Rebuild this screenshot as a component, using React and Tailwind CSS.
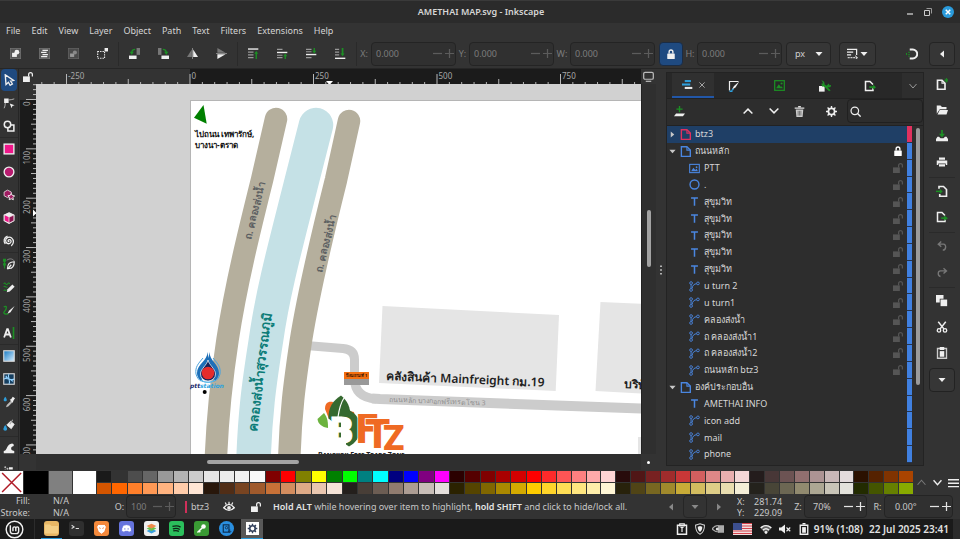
import clsx from 'clsx'

const W = '#efefef'
const G = '#1c8f24'
const B = '#2f9fdc'
const P = '#f0178a'

const MENUS = ['File', 'Edit', 'View', 'Layer', 'Object', 'Path', 'Text', 'Filters', 'Extensions', 'Help']

const SWATCHES_TOP =
  '1a1a1a 333333 4d4d4d 666666 999999 b3b3b3 cccccc e6e6e6 ececec f2f2f2 f9f9f9 800000 ff0000 808000 ffff00 008000 00ff00 008080 00ffff 000080 0000ff 800080 ff00ff 2b0000 550000 800000 aa0000 d40000 ff0000 ff2a2a ff5555 ff8080 ffaaaa ffd5d5 280b0b 501616 782121 a02c2c c83737 d35f5f de8787 e9afaf f4d7d7 241c1c 483737 6c5353 916f6f ac9393 c8b7b7 e3dbdb 2b1100 552200 803300 aa4400'.split(' ')
const SWATCHES_BOTTOM =
  'd45500 ff6600 ff7f2a ff9955 ffb380 ffccaa ffe6d5 28170b 502d16 784421 a05a2c c87137 d38d5f deaa87 e9c6af f4e3d7 241f1c 483e37 6c5d53 917c6f ac9d93 c8beb7 e3dedb 2b2200 554400 806600 aa8800 d4aa00 ffcc00 ffd42a ffdd55 ffe680 ffeeaa fff6d5 28220b 504416 786721 a0892c c8ab37 d3bc5f decd87 e9ddaf f4eed7 24221c 484537 6c6753 918a6f aca793 c8c4b7 e3e2db 222b00 445500 668000 88aa00'.split(' ')

const ROWS = [
  { name: 'btz3', kind: 'layer', depth: 0, open: false, selected: true },
  { name: 'ถนนหลัก', kind: 'layer', depth: 0, open: true, lock: 'closed' },
  { name: 'PTT', kind: 'image', depth: 1, lock: 'open' },
  { name: '.', kind: 'circle', depth: 1, lock: 'open' },
  { name: 'สุขุมวิท', kind: 'text', depth: 1, lock: 'open' },
  { name: 'สุขุมวิท', kind: 'text', depth: 1, lock: 'open' },
  { name: 'สุขุมวิท', kind: 'text', depth: 1, lock: 'open' },
  { name: 'สุขุมวิท', kind: 'text', depth: 1, lock: 'open' },
  { name: 'สุขุมวิท', kind: 'text', depth: 1, lock: 'open' },
  { name: 'u turn 2', kind: 'path', depth: 1, lock: 'open' },
  { name: 'u turn1', kind: 'path', depth: 1, lock: 'open' },
  { name: 'คลองส่งน้ำ', kind: 'path', depth: 1, lock: 'open' },
  { name: 'ถ คลองส่งน้ำ1', kind: 'path', depth: 1, lock: 'open' },
  { name: 'ถ คลองส่งน้ำ2', kind: 'path', depth: 1, lock: 'open' },
  { name: 'ถนนหลัก btz3', kind: 'path', depth: 1, lock: 'open' },
  { name: 'องค์ประกอบอื่น', kind: 'layer', depth: 0, open: true },
  { name: 'AMETHAI INFO', kind: 'text', depth: 1 },
  { name: 'icon add', kind: 'path', depth: 1 },
  { name: 'mail', kind: 'path', depth: 1 },
  { name: 'phone', kind: 'path', depth: 1 },
]

function Icon({ className = 'size-3', children }) {
  return (
    <svg viewBox="0 0 16 16" className={clsx('shrink-0', className)} fill="none" aria-hidden="true">
      {children}
    </svg>
  )
}

function Btn({ label, className, children }) {
  return (
    <button type="button" aria-label={label} className={clsx('flex items-center justify-center', className)}>
      {children}
    </button>
  )
}

function LockIcon({ open, color = W, className }) {
  return (
    <Icon className={className}>
      {open ? (
        <>
          <rect x="0" y="7" width="11" height="9" fill={color} />
          <path d="M9 7V4a3 3 0 0 1 6 0v3" stroke={color} strokeWidth="2" />
        </>
      ) : (
        <>
          <rect x="2" y="7" width="12" height="9" rx="1" fill={color} />
          <path d="M5 7V4.500a3 3 0 0 1 6 0V7" stroke={color} strokeWidth="2.200" />
        </>
      )}
    </Icon>
  )
}

function Triangle({ dir = 'down', color = W, className = 'size-2' }) {
  const d = {
    down: 'M1 4h14l-7 8z',
    left: 'M12 1v14L4 8z',
    right: 'M4 1v14l8-7z',
  }[dir]
  return (
    <Icon className={className}>
      <path d={d} fill={color} />
    </Icon>
  )
}

const TOOLBAR = [
  [
    ['Select all', <>
      <rect x=".5" y=".5" width="15" height="15" fill="#555" stroke="#777" />
      <rect x="3" y="7" width="7" height="6" fill={W} /><circle cx="10" cy="6" r="3.500" fill={W} />
    </>],
    ['Select all in all layers', <>
      <rect x=".5" y=".5" width="15" height="15" fill="#555" stroke="#777" />
      <path d="M5 3.500h8M3 6.500h8M5 9.500h8M3 12.500h9" stroke={W} strokeWidth="1.800" />
    </>],
    ['Deselect', <>
      <rect x=".5" y=".5" width="15" height="15" fill="#4a4a4a" stroke="#666" />
      <rect x="3" y="8" width="6" height="5" fill="#999" /><circle cx="10" cy="6.500" r="3" fill="#888" />
    </>],
    ['Toggle selection box', <>
      <rect x="1" y="5" width="10" height="10" stroke={W} strokeWidth="1.600" strokeDasharray="2 1.500" />
      <rect x="11" y="0" width="5" height="5" fill={W} />
    </>],
  ],
  [
    ['Rotate left', <>
      <rect x="11" y="0" width="5" height="10" fill="#777" /><rect x="0" y="11" width="11" height="5" fill={W} />
      <path d="M9 2C6 2 4 4 4 7" stroke={G} strokeWidth="2" /><path d="M1 5.500h6L4 10z" fill={G} />
    </>],
    ['Rotate right', <>
      <rect x="0" y="0" width="5" height="10" fill="#777" /><rect x="5" y="11" width="11" height="5" fill={W} />
      <path d="M7 2c3 0 5 2 5 5" stroke={G} strokeWidth="2" /><path d="M9 5.500h6L12 10z" fill={G} />
    </>],
    ['Flip horizontal', <>
      <path d="M7 2v11H0z" fill="#777" /><path d="M9 2v11h7z" fill={W} /><path d="M8 0v16" stroke="#aaa" />
    </>],
    ['Flip vertical', <>
      <path d="M2 0v7h12z" fill="#777" /><path d="M2 16V9h12z" fill={W} /><path d="M0 8h16" stroke="#aaa" />
    </>],
  ],
  [
    ['Raise to top', <>
      <path d="M0 1.500h15" stroke={W} strokeWidth="2" />
      <path d="M0 6h8M0 10h8M0 14h8" stroke="#999" strokeWidth="1.600" />
      <path d="M12 16V6" stroke={G} strokeWidth="2" /><path d="M9 8.500l3-4 3 4z" fill={G} />
    </>],
    ['Raise', <>
      <path d="M0 6.500h15" stroke={W} strokeWidth="2" />
      <path d="M0 2h8M0 10.500h8M0 14h8" stroke="#999" strokeWidth="1.600" />
      <path d="M12 16v-5" stroke={G} strokeWidth="2" /><path d="M9 12l3-4 3 4z" fill={G} />
    </>],
    ['Lower', <>
      <path d="M0 9.500h15" stroke={W} strokeWidth="2" />
      <path d="M0 2h8M0 5.500h8M0 14h8" stroke="#999" strokeWidth="1.600" />
      <path d="M12 0v5" stroke={G} strokeWidth="2" /><path d="M9 4l3 4 3-4z" fill={G} />
    </>],
    ['Lower to bottom', <>
      <path d="M0 15h15" stroke={W} strokeWidth="2" />
      <path d="M0 2h6M0 6h6M0 10h6" stroke="#999" strokeWidth="1.600" />
      <path d="M11 0v9" stroke={G} strokeWidth="2.500" /><path d="M8 8l3 4 3-4z" fill={G} />
    </>],
  ],
]

const TOOLS = [
  [
    ['Selector', <path d="M3 1l11 7.500-4 .8 2.500 4-3 1.700-2.300-4L4 14z" fill="none" stroke={W} strokeWidth="1.800" />],
    ['Node editor', <>
      <rect x="1.500" y="2" width="6" height="6" fill={W} /><path d="M3 8c0 3-.5 5-1.500 7M7 4c3-.2 5-.5 8-1.500" stroke="#bbb" strokeWidth="1.200" />
      <path d="M9 8.500l6.500 2.500-3 1-1 3z" fill={W} />
    </>],
    ['Shape builder', <>
      <circle cx="6" cy="6" r="4.300" stroke={W} strokeWidth="2" />
      <path d="M9.500 6.500H14.500v8h-8V10" stroke={W} strokeWidth="2" />
    </>],
  ],
  [
    ['Rectangle', <rect x="1.500" y="1.500" width="13" height="13" fill={P} stroke={W} strokeWidth="1.800" />],
    ['Ellipse', <circle cx="8" cy="8" r="6.500" fill="#b81c70" stroke={W} strokeWidth="1.800" />],
    ['Star', <>
      <path d="M6 1.500l5 2.500v5l-5 2.500L1.500 9V4z" fill="#a01c62" stroke="#d9c4cf" strokeWidth="1.300" />
      <path d="M11 6l1.500 2.700 3 .4-2.200 2.200.5 3L11 13l-2.800 1.300.5-3L6.500 9l3-.4z" fill="#a01c62" stroke={W} strokeWidth="1.300" />
    </>],
    ['3D box', <>
      <path d="M8 1l6.500 3v7.500L8 15l-6.500-3.500V4z" fill={P} stroke={W} strokeWidth="1.500" />
      <path d="M1.500 4L8 7l6.500-3L8 1z" fill="#eee" /><path d="M8 7v8l6.500-3.500V4z" fill="#8a1450" stroke={W} />
    </>],
    ['Spiral', <path d="M8.500 8.500c-1.500 1-2.500-1-1-2 2.500-1.300 4.500 2 2.500 4-2.500 2.500-6.800.5-6.500-3.500C4 3 8.500 1.500 11.500 4c3.500 3 3 8-.5 10.500M3 12C.5 8 1 3 6 1.500" stroke={W} strokeWidth="1.700" />],
  ],
  [
    ['Pen', <>
      <path d="M2 3v11" stroke={G} strokeWidth="1.500" /><rect x="0" y="1" width="4" height="4" fill={G} /><rect x="0" y="7" width="4" height="3" fill={G} />
      <path d="M5 3c4-3 8-2 10 1" stroke="#888" strokeWidth="1.200" />
      <path d="M6 14c0-5 3-9 9-9 0 6-3 9-7 9z" stroke={W} strokeWidth="1.600" /><path d="M6 15l5-6" stroke={W} strokeWidth="1.600" />
    </>],
    ['Pencil', <>
      <path d="M1 4c2-4 3 3 5 0s3 0 3 0M1 8c2-3 2 2 5 0M1 13c1-3 2 1 4-1" stroke={G} strokeWidth="1.400" />
      <path d="M5 15l1-4 6.500-6.500 3 3L9 14z" fill={W} />
    </>],
    ['Calligraphy', <>
      <path d="M1 4c5-3 4 3 1 6s2 4 5 3" stroke={G} strokeWidth="1.800" /><path d="M6 13l2-4 7.500-6.500L10 11z" fill={W} />
    </>],
    ['Text', <>
      <path d="M1.500 14L5.500 3h1L10.500 14M3 10h6" stroke={W} strokeWidth="2.400" /><path d="M14 0v16" stroke={G} strokeWidth="2.200" />
    </>],
  ],
  [
    ['Gradient', <>
      <defs><linearGradient id="tool-grad" x1="0" y1="0" x2="1" y2="1"><stop stopColor="#1479c4" /><stop offset="1" stopColor="#d8efff" /></linearGradient></defs>
      <rect x="1" y="1" width="14" height="14" fill="url(#tool-grad)" stroke="#d8d8d8" strokeWidth="1.500" />
    </>],
    ['Mesh', <>
      <rect x="1" y="1" width="14" height="14" fill="#163f60" stroke="#d8d8d8" strokeWidth="1.500" />
      <path d="M8 1c-3 4 3 10 0 14M1 8c4-3 10 3 14 0" stroke="#9ad6ff" strokeWidth="1.400" />
      <path d="M8 8L4 3l-1 3zM8 8l5 4V8z" fill="#8fd0ff" />
    </>],
    ['Dropper', <>
      <path d="M4 15l1-3 6-6 2 2-6 6z" fill="#bbb" /><path d="M9 5l2-1 2-3 3 2-2 3-1 3z" fill={W} />
      <path d="M3 1c3 4 2.500 6 0 6S0 5 3 1z" fill={B} />
    </>],
    ['Paint bucket', <>
      <path d="M5 8l5-5 5 4-4 6z" fill={W} stroke={W} /><path d="M9 7l4-6" stroke="#aaa" strokeWidth="1.500" /><path d="M3 8c3.500 5 3 7.500 0 7.500S-.5 13 3 8z" fill={B} />
    </>],
  ],
  [
    ['Tweak', <path d="M1 15v-3c4 0 4-7 8-9l3-1c3 0 3 4 1 4s-3 3-1 5l3 1v3z" fill={W} />],
    ['Spray', <>
      <circle cx="3" cy="3" r="1.300" fill="#bbb" /><circle cx="3" cy="7" r="1.300" fill="#888" /><circle cx="6" cy="5" r="1.300" fill="#bbb" />
      <rect x="8" y="3" width="5" height="3" fill={W} /><rect x="7" y="7" width="8" height="9" fill={W} />
    </>],
  ],
]

const pageOut = <path d="M9 14H2V2h6l4 4M12 11v3H9" stroke={W} strokeWidth="2" />

const COMMANDS = [
  [
    ['New document', <>
      <path d="M2 3h6l4 4v8H2z" stroke={W} strokeWidth="2.200" /><path d="M8 3v4h4" stroke={W} strokeWidth="1.500" />
      <path d="M14 0v6M11 3h6M12 1l4 4M16 1l-4 4" stroke={G} strokeWidth="1.200" />
    </>],
    ['Open document', <path d="M1 2h5l2 2h6v3H5l-4 6zM5 8h11l-2 6H2z" fill={W} />],
    ['Save document', <>
      <path d="M8 0v7" stroke={G} strokeWidth="2.200" /><path d="M4 5h8l-4 5z" fill={G} /><path d="M2 9h2l2 2h4l2-2h2l2 3v3H0v-3z" fill={W} />
    </>],
    ['Print', <path d="M4 2h8v3H4zM1 6h14v6h-2v-2H3v2H1zM4 11h8v3H4z" fill={W} />],
  ],
  [
    ['Import', <>
      <path d="M4 5V2h6l4 4v9H5v-3" stroke={W} strokeWidth="2.200" /><path d="M0 8.500h6" stroke={G} strokeWidth="2" /><path d="M5 5l4 3.500L5 12z" fill={G} />
    </>],
    ['Export', <>
      {pageOut}<path d="M7 9.500h5" stroke={G} strokeWidth="2.200" /><path d="M11 6l5 3.500-5 3.500z" fill={G} />
    </>],
  ],
  [
    ['Undo', <path d="M7 2L3 5.500 7 9M3 5.500h7c4 0 4 8-1 8" stroke="#777" strokeWidth="1.800" />],
    ['Redo', <path d="M10 3l4 3.500L10 10M14 6.500H6c-4 0-4 7 0 7.500" stroke="#777" strokeWidth="1.800" />],
  ],
  [
    ['Copy', <><rect x="0" y="0" width="10" height="10" fill={W} /><rect x="5.500" y="5.500" width="10" height="10" fill={W} stroke="#333" /></>],
    ['Cut', <>
      <circle cx="4" cy="12.500" r="2.300" stroke={W} strokeWidth="1.800" /><circle cx="12" cy="12.500" r="2.300" stroke={W} strokeWidth="1.800" />
      <path d="M5.500 10.500L13 1M10.500 10.500L3 1" stroke={W} strokeWidth="2" />
    </>],
    ['Paste', <>
      <path d="M2 2h12v13H2z" stroke="#ccc" strokeWidth="1.800" /><rect x="5" y="0" width="6" height="4" fill={W} /><rect x="5" y="5.500" width="6" height="7.500" fill={W} />
    </>],
  ],
]

function Spin({ id, label, value, labelClass, boxClass, inputClass = 'pl-1', muted }) {
  const tone = muted ? 'text-[#7c7c7c]' : 'text-[#c8c8c8]'
  const sign = muted ? '#5c5c5c' : '#e4e4e4'
  return (
    <div className={clsx('flex items-center', tone)}>
      <label htmlFor={id} className={clsx('shrink-0 text-center', labelClass)}>{label}</label>
      <div className={clsx('flex items-center rounded border border-[#242424] bg-[#303030]', boxClass)}>
        <input id={id} type="text" defaultValue={value} className={clsx('w-0 min-w-0 flex-1 bg-transparent outline-none', inputClass)} />
        <Btn label={`Decrease ${label}`} className="h-full w-3">
          <Icon className="size-[9px]"><path d="M0 8h16" stroke={sign} strokeWidth="2.200" /></Icon>
        </Btn>
        <Btn label={`Increase ${label}`} className="h-full w-3">
          <Icon className="size-[9px]"><path d="M0 8h16M8 0v16" stroke={sign} strokeWidth="2.200" /></Icon>
        </Btn>
      </div>
    </div>
  )
}

function TitleBar() {
  return (
    <header className="flex h-[23px] shrink-0 items-center border-t border-[#3a3a3a] bg-[#2b2b2b] pr-[6px]">
      <div className="w-14" />
      <h1 className="flex-1 text-center font-semibold text-[#d6d6d6]">AMETHAI MAP.svg - Inkscape</h1>
      <div className="flex w-12 items-center justify-between">
        <Btn label="Minimize" className="h-3 w-2"><Icon className="size-2"><path d="M2 12h12" stroke="#bbb" strokeWidth="3" /></Icon></Btn>
        <Btn label="Restore" className="h-3 w-2">
          <Icon className="size-2"><path d="M1 5h10v10H1z" stroke="#ccc" strokeWidth="2" /><path d="M5 1h10v10" stroke="#999" strokeWidth="2" /></Icon>
        </Btn>
        <Btn label="Close" className="size-3 rounded-full bg-[#2a9bdc]">
          <Icon className="size-[6px]"><path d="M2 2l12 12M14 2L2 14" stroke="#fff" strokeWidth="4" /></Icon>
        </Btn>
      </div>
    </header>
  )
}

function MenuBar() {
  return (
    <nav className="flex h-4 shrink-0 items-center gap-[11px] pl-[6px] text-[#d4d4d4]">
      {MENUS.map((m) => (
        <button key={m} type="button">{m}</button>
      ))}
    </nav>
  )
}

function Toolbar() {
  return (
    <div className="flex h-[30px] shrink-0 items-center border-b border-[#262626] pr-[5px]">
      {TOOLBAR.map((group, i) => (
        <div key={i} className="flex h-6 border-r border-[#2a2a2a] px-px">
          {group.map(([label, icon]) => (
            <Btn key={label} label={label} className="w-[29px]"><Icon className="size-[11px]">{icon}</Icon></Btn>
          ))}
        </div>
      ))}
      <Spin id="pos-x" label="X:" value="0.000" labelClass="w-[14px]" boxClass="h-6 w-[85px]" muted />
      <Spin id="pos-y" label="Y:" value="0.000" labelClass="w-[13px]" boxClass="h-6 w-[85px]" muted />
      <Spin id="pos-w" label="W:" value="0.000" labelClass="w-4" boxClass="h-6 w-[85px]" muted />
      <Btn label="Lock ratio" className="ml-1 h-6 w-6 rounded border border-[#1b2c44] bg-[#1f4a80]"><LockIcon className="size-[10px]" /></Btn>
      <Spin id="pos-h" label="H:" value="0.000" labelClass="w-[14px]" boxClass="h-6 w-[85px]" muted />
      <div className="relative ml-1">
        <select aria-label="Unit" className="h-6 w-[45px] appearance-none rounded border border-[#242424] bg-[#363636] pl-2 text-[#d0d0d0]">
          <option>px</option>
        </select>
        <Triangle className="pointer-events-none absolute top-2 right-2 size-2" />
      </div>
      <Btn label="Transform options" className="ml-2 h-6 w-[37px] gap-[2px] rounded border border-[#242424] bg-[#363636]">
        <Icon className="size-[11px]">
          <path d="M0 2h14v8M0 6h9M0 10h6" stroke={W} strokeWidth="1.800" /><path d="M1 14h14M12 11l3 3-3 3" stroke="#ccc" strokeWidth="1.600" strokeDasharray="3 1" />
        </Icon>
        <Triangle />
      </Btn>
      <div className="flex-1" />
      <Btn label="Snapping" className="mr-[5px] w-6">
        <Icon className="size-3">
          <path d="M5 2h4a6 6 0 0 1 0 12H5" stroke={W} strokeWidth="2.600" /><path d="M4 5v7M0 7l2 1-2 1" stroke={G} strokeWidth="1.800" strokeDasharray="1.500 1.500" />
        </Icon>
      </Btn>
      <Btn label="Collapse snap bar" className="h-6 w-[26px] rounded border border-[#242424] bg-[#363636]"><Triangle dir="left" /></Btn>
    </div>
  )
}

function Toolbox() {
  return (
    <div className="w-[19px] shrink-0 overflow-hidden border-r border-[#262626]">
      {TOOLS.map((group, i) => (
        <div key={i} className={clsx(i > 0 && 'border-t border-[#2a2a2a]')}>
          {group.map(([label, icon], j) => (
            <Btn
              key={label}
              label={label}
              className={clsx('mx-px h-[22px] w-4 rounded-sm', j > 0 && 'mt-px', i === 0 && j === 0 && 'bg-[#1f4a80]')}
            >
              <Icon>{icon}</Icon>
            </Btn>
          ))}
        </div>
      ))}
    </div>
  )
}

// One ruler step is a tenth of the labelled interval, as on the rulers of the app itself
function TopRuler() {
  const ticks = []
  for (let i = -12; i < 60; i++) ticks.push(i)
  return (
    <svg className="block h-[15px] w-[900px]" viewBox="36 69 900 15">
      <rect x="190" y="69" width="900" height="15" fill="#1b1b1b" />
      {ticks.map((i) => {
        const x = 190 + i * 12.35
        const top = i % 10 === 0 ? 74 : i % 5 === 0 ? 79 : 82
        return <path key={i} d={`M${x} ${top}V84`} stroke="#b8b8b8" strokeWidth="1" />
      })}
      {[-250, 0, 250, 500, 750].map((v) => (
        <text key={v} x={191.5 + v * 0.494} y="79" fontSize="8" fill="#a8a8a8">{v}</text>
      ))}
      <path d="M326 81h7l-3.500 4z" fill="#fff" />
    </svg>
  )
}

function SideRuler() {
  const ticks = []
  for (let i = -3; i < 120; i++) ticks.push(i)
  return (
    <svg className="block h-[500px] w-4" viewBox="20 84 16 500">
      <rect x="20" y="100" width="16" height="500" fill="#1b1b1b" />
      {ticks.map((i) => {
        const y = 99.5 + i * 4.935
        const left = i % 10 === 0 ? 26 : i % 5 === 0 ? 31 : 33
        return <path key={i} d={`M${left} ${y}H36`} stroke="#b8b8b8" strokeWidth="1" />
      })}
      {[0, 100, 200, 300, 400, 500, 600, 700].map((v) => (
        <text key={v} transform={`translate(30 ${101.500 + v * 0.4935}) rotate(-90)`} textAnchor="end" fontSize="8" fill="#a8a8a8">{v}</text>
      ))}
      <path d="M33 209.500v7l3.500-3.500z" fill="#fff" />
    </svg>
  )
}

function PttLogo() {
  return (
    <g>
      <path d="M207.500 352c0 9-10.500 12-10.500 21 0 4 3 8 6 9-4-8 2-15 5-20 3 5 9 12 5 20 3-1 6-5 6-9 0-9-9.500-12-9.500-21l-1 6z" fill="#1d6fb8" />
      <path d="M203 358c-5 6-8 9-7 16 1 4 3 6 5 7M213 358c5 6 8 9 7 16-1 4-3 6-5 7" stroke="#4ba3dd" strokeWidth="1" fill="none" />
      <path d="M208 360c1 5 7.500 9 7.500 14a7.500 7 0 0 1-15 0c0-5 6.500-9 7.500-14z" fill="#15245c" stroke="#fff" strokeWidth=".7" />
      <circle cx="208" cy="373" r="6.300" fill="#e52c2c" />
      <path d="M201 380c4 3 10 3 14 0-2 3-12 3-14 0z" fill="#5bb8ea" stroke="#5bb8ea" />
      <text x="190" y="388" fontSize="6" fontWeight="bold" fontStyle="italic" fontFamily="DejaVu Sans" fill="#1b2a6b">ptt<tspan fill="#2aa3df">station</tspan></text>
      <circle cx="204.700" cy="392" r="2" fill="#000" />
    </g>
  )
}

function FtzLogo() {
  return (
    <g>
      <path d="M325 409c0-6 3-8 8-7l-1 16-3 1z" fill="#ef6a23" />
      <path d="M349 411l5 1 1 8-5-3z" fill="#ef6a23" />
      <path d="M317.500 419l6.500-6c4 5 4 10 4 15-6-1-10-4-10.500-9z" fill="#6cb33f" />
      <path d="M341 395.500c-8 5-13 12-12.500 23l5 4 17-6c0-9-3-16-9.500-21z" fill="#35692f" />
      <path d="M349 410c8 4 12 11 11.500 19-.5 8-5 14-11.500 17.500l-3-2V412z" fill="#35692f" />
      <path d="M344 398c-4 6-5 12-6 19" stroke="#fff" strokeWidth="1.200" fill="none" />
      <path d="M333 420h8v21h-8z" fill="#35692f" />
      <text x="330" y="443" fontSize="36" fontFamily="Roboto" fontWeight="900" fill="#fff" stroke="#fff" strokeWidth="1">B</text>
      <text fontFamily="Roboto" fontWeight="900" fill="#ef6a23" stroke="#fff" strokeWidth="1.500" paintOrder="stroke">
        <tspan x="356" y="443" fontSize="40">F</tspan>
        <tspan x="365" y="448" fontSize="40">T</tspan>
        <tspan x="383" y="450" fontSize="35">Z</tspan>
      </text>
      <text x="318" y="457" fontSize="7" fontWeight="bold" fill="#222" style={{ fontVariant: 'small-caps' }}>Bangkok Free Trade Zone</text>
    </g>
  )
}

function Drawing() {
  return (
    <svg className="block h-[500px] w-[900px]" viewBox="36 84 900 500" role="img" aria-label="AMETHAI MAP">
      <rect x="190.500" y="100.500" width="900" height="600" fill="#fff" stroke="#b5b5b5" />
      <path d="M382.500 306L559 315l-3.300 76L379 383z" fill="#e5e5e5" />
      <path d="M600.500 302l90 4v90l-95-5z" fill="#e5e5e5" />
      <path d="M638 437h60v60h-60z" fill="#e5e5e5" />
      <g fill="none" stroke="#cccccc" strokeWidth="9">
        <path d="M306 345.500l37 3q11.500 1 11.500 11v19q0 19 22 20.500" />
        <path d="M372 398.500l8 .5 300 11" strokeWidth="10" />
      </g>
      <g fill="none" strokeLinecap="round">
        <path d="M276 119L262 180C250 228 236 284 227.500 340 222 376 217 415 215.500 470" stroke="#b5af9d" strokeWidth="22.500" />
        <path d="M316 125L302 180C288 236 273 290 266 340 260 378 254 415 253 480" stroke="#c5e1e6" strokeWidth="34.500" />
        <path d="M349 121L336 180C326 220 309 290 301 340 295 380 290 415 289 470" stroke="#b5af9d" strokeWidth="22.500" />
      </g>
      <path d="M203.500 105l-9.500 12.700 12.700 6z" fill="#008000" />
      <g fontWeight="bold" fill="#111">
        <text x="195" y="137" fontSize="8">ไปถนน เทพารักษ์,</text>
        <text x="195" y="148" fontSize="8">บางนา-ตราด</text>
        <text transform="translate(386 380) rotate(2.400)" fontSize="12" fontWeight="600" fill="#1f1f1f">คลังสินค้า Mainfreight กม.19</text>
        <text transform="translate(624 388) rotate(2.400)" fontSize="12" fontWeight="600" fill="#1f1f1f">บริษัท</text>
      </g>
      <text transform="translate(389 402) rotate(2)" fontSize="7" fill="#8f8f8f">ถนนหลัก บางกอกฟรีเทรดโซน 3</text>
      <g fontSize="10" fontWeight="600" fill="#5d6062">
        <text transform="translate(251 240) rotate(-76)">ถ. คลองส่งน้ำ</text>
        <text transform="translate(322 273) rotate(-76)">ถ. คลองส่งน้ำ</text>
      </g>
      <text transform="translate(257 432) rotate(-83)" fontSize="13" fontWeight="bold" fill="#0c7c78">คลองส่งน้ำสุวรรณภูมิ</text>
      <rect x="344" y="379" width="25" height="6" fill="#999" />
      <rect x="344" y="372" width="25" height="7" fill="#f36f10" />
      <text x="346" y="377" fontSize="4" fontWeight="bold" fill="#301000">ป้อมยามที่ 1</text>
      <PttLogo />
      <FtzLogo />
    </svg>
  )
}

function Canvas() {
  return (
    <main className="grid min-w-0 flex-1 grid-cols-[17px_minmax(0,1fr)_15px] grid-rows-[15px_minmax(0,1fr)_16px]">
      <Btn label="Lock guides"><LockIcon open className="size-[10px]" /></Btn>
      <div className="overflow-hidden"><TopRuler /></div>
      <Btn label="Display mode">
        <Icon className="size-[11px]"><rect x="1" y="2" width="14" height="10" rx="2" stroke="#bbb" strokeWidth="1.800" /><path d="M4 15h8" stroke="#bbb" strokeWidth="1.800" /></Icon>
      </Btn>
      <div className="overflow-hidden pl-px"><SideRuler /></div>
      <div className="overflow-hidden bg-[#d1d1d1]"><Drawing /></div>
      <div className="flex flex-col items-center border-l border-[#222] bg-[#2f2f2f]">
        <div className="h-[126px]" />
        <div className="h-[57px] w-1 rounded-full bg-[#a3a3a3]" />
      </div>
      <div />
      <div className="flex items-center bg-[#2f2f2f] pl-[171px]">
        <div className="h-1 w-[92px] rounded-full bg-[#a3a3a3]" />
      </div>
      <div className="flex items-center justify-center"><div className="size-[3px] rounded-full bg-white" /></div>
    </main>
  )
}

function KindIcon({ kind, selected }) {
  const c = '#4a86e0'
  if (kind === 'layer')
    return <Icon className="size-[11px]"><path d="M2 1h8l5 5v9H2z" stroke={selected ? '#e0315f' : c} strokeWidth="2" /><path d="M10 1v5h5" stroke={selected ? '#e0315f' : c} strokeWidth="1.500" /></Icon>
  if (kind === 'image')
    return <Icon className="size-[11px]"><rect x="1" y="2" width="14" height="12" stroke={c} strokeWidth="1.600" /><path d="M3 12l3.500-5 2.500 3 2-2 2 4z" fill={c} /><circle cx="11" cy="6" r="1.300" fill={c} /></Icon>
  if (kind === 'circle')
    return <Icon className="size-[11px]"><circle cx="8" cy="8" r="6.500" stroke={c} strokeWidth="2" /></Icon>
  if (kind === 'text')
    return <Icon className="size-[11px]"><path d="M3 3h10M8 3v11" stroke={c} strokeWidth="2.200" /></Icon>
  return (
    <Icon className="size-[11px]">
      <path d="M3 5v6M4.500 11C5 6 8 4 11 4" stroke={c} strokeWidth="1.400" />
      <circle cx="3" cy="3" r="2" stroke={c} strokeWidth="1.300" /><circle cx="3" cy="13" r="2" stroke={c} strokeWidth="1.300" /><circle cx="13" cy="3.500" r="2" stroke={c} strokeWidth="1.300" />
    </Icon>
  )
}

function Row({ row }) {
  return (
    <li className={clsx('flex min-h-0 flex-1 items-center text-[#d6d6d6]', row.selected && 'bg-[#1f3f66]')}>
      <div className="flex w-[10px] justify-center">
        {row.depth === 0 && <Triangle dir={row.open ? 'down' : 'right'} color="#c8c8c8" className="size-[7px]" />}
      </div>
      <div className={clsx('flex min-w-0 flex-1 items-center gap-1', row.depth ? 'pl-3' : 'pl-[3px]')}>
        <KindIcon kind={row.kind} selected={row.selected} />
        <span className="whitespace-nowrap leading-4">{row.name}</span>
      </div>
      {row.lock && (
        <Btn label={row.lock === 'open' ? `Lock ${row.name}` : `Unlock ${row.name}`} className="mr-1">
          <LockIcon open={row.lock === 'open'} color={row.lock === 'open' ? '#555555' : '#ffffff'} className="size-[10px]" />
        </Btn>
      )}
      <div className={clsx('h-full w-[5px] border-b border-[#243450]', row.selected ? 'bg-[#e0315f]' : 'bg-[#4080e0]')} />
    </li>
  )
}

function ObjectsPanel() {
  return (
    <aside className="mt-[3px] mb-1 flex w-[258px] shrink-0 flex-col border border-[#232323] bg-[#2d2d2d]">
      <div className="flex h-[26px] shrink-0 items-stretch border-b border-[#222] bg-[#282828] pl-[5px]" role="tablist">
        <button type="button" role="tab" aria-label="Layers and Objects" className="flex w-[42px] items-center justify-center gap-[6px] border-b-2 border-[#2257a8] bg-[#303030]">
          <Icon className="size-[11px]">
            <path d="M4 3h9" stroke={B} strokeWidth="3" /><path d="M0 8h12" stroke={B} strokeWidth="3" /><path d="M4 13h11" stroke="#e8e8e8" strokeWidth="3" />
          </Icon>
          <Icon className="size-[6px]"><path d="M1 1l14 14M15 1L1 15" stroke="#aaa" strokeWidth="2.500" /></Icon>
        </button>
        <Btn label="Fill and Stroke" className="w-10">
          <Icon><path d="M2 14V2h12" stroke={W} strokeWidth="1.600" /><path d="M2 15h4" stroke={B} strokeWidth="2" /><path d="M5 13l3-5 7-6-5 8z" fill={W} /><path d="M4 15l2-4 2 2z" fill={B} /></Icon>
        </Btn>
        <Btn label="Export" className="w-[51px]">
          <Icon className="size-[11px]"><rect x="1" y="1" width="14" height="14" stroke={G} strokeWidth="1.800" /><path d="M3 12l4-6 3 4 1-1 2 3z" fill={G} /><circle cx="11" cy="5" r="1.500" fill={G} /></Icon>
        </Btn>
        <Btn label="Symbols" className="w-[39px]">
          <Icon><rect x="0" y="8" width="7.500" height="7.500" fill={W} /><path d="M3 0l3 1.500 1.500 2.500-.3 1.500 2.800 2 3-3 1 2.500 3-.500-2 3-3.500.5 4 3.500-2 1.500-7-6.500-2 .5L3 5l2-.5V3z" fill={G} /></Icon>
        </Btn>
        <Btn label="Export page" className="w-[51px]">
          <Icon>{pageOut}<path d="M7 9.500h6" stroke={G} strokeWidth="2.200" /><path d="M12 6l4 3.500-4 3.500z" fill={G} /></Icon>
        </Btn>
        <Btn label="More dialogs" className="ml-auto w-[21px] bg-[#2e2e2e]"><Icon className="size-2"><path d="M1 4l7 8 7-8" stroke="#999" strokeWidth="2" /></Icon></Btn>
      </div>
      <div className="flex h-[26px] shrink-0 items-start pl-[6px]">
        <Btn label="Add layer" className="h-6 w-3">
          <Icon className="size-[11px]"><path d="M8 0v9M3.500 4.500h9" stroke={G} strokeWidth="2" /><path d="M3 11h13l-3 4H0z" fill={W} /></Icon>
        </Btn>
        <div className="flex-1" />
        <Btn label="Raise" className="h-6 w-[26px]"><Icon className="size-[10px]"><path d="M1 12l7-7 7 7" stroke={W} strokeWidth="2.400" /></Icon></Btn>
        <Btn label="Lower" className="h-6 w-[26px]"><Icon className="size-[10px]"><path d="M1 4l7 7 7-7" stroke={W} strokeWidth="2.400" /></Icon></Btn>
        <Btn label="Delete" className="h-6 w-[25px]">
          <Icon className="size-[11px]"><path d="M1 3h14M6 1h4" stroke="#ddd" strokeWidth="1.800" /><path d="M2.500 5h11l-1 11h-9z" fill="#ccc" /><path d="M6 7v7M8 7v7M10 7v7" stroke="#555" /></Icon>
        </Btn>
        <Btn label="Settings" className="ml-1 h-6 w-[30px]">
          <Icon className="size-[11px]"><circle cx="8" cy="8" r="4.500" stroke={W} strokeWidth="2.500" /><path d="M8 0v3M8 13v3M0 8h3M13 8h3M2.300 2.300l2 2M11.700 11.700l2 2M13.700 2.300l-2 2M4.300 11.700l-2 2" stroke={W} strokeWidth="2" /></Icon>
        </Btn>
        <div className="ml-px flex h-6 w-[76px] items-center rounded border border-[#202020] pl-[2px]">
          <Icon className="size-[11px]"><circle cx="7" cy="7" r="5.500" stroke={W} strokeWidth="1.800" /><path d="M11 11l4.500 4.500" stroke={W} strokeWidth="2" /></Icon>
          <input type="search" aria-label="Search objects" className="w-0 min-w-0 flex-1 bg-transparent outline-none" />
        </div>
      </div>
      <div className="flex min-h-0 flex-1 border-t border-[#222]">
        <ul className="flex min-w-0 flex-1 flex-col pb-[2px]">
          {ROWS.map((row, i) => <Row key={i} row={row} />)}
        </ul>
        <div className="flex w-[11px] justify-center pt-[2px]"><div className="h-[257px] w-1 rounded-full bg-[#9a9a9a]" /></div>
      </div>
    </aside>
  )
}

function CommandBar() {
  return (
    <div className="flex w-9 shrink-0 flex-col items-center pt-[2px]">
      {COMMANDS.map((group, i) => (
        <div key={i} className={clsx('flex w-[26px] flex-col', i > 0 && 'mt-[2px] border-t border-[#2a2a2a]')}>
          {group.map(([label, icon]) => (
            <Btn key={label} label={label} className="h-[26px]"><Icon>{icon}</Icon></Btn>
          ))}
        </div>
      ))}
      <Btn label="More commands" className="mt-[2px] h-6 w-[26px] rounded border border-[#222] bg-[#363636]"><Triangle /></Btn>
    </div>
  )
}

function Palette() {
  return (
    <div className="flex h-6 shrink-0 items-stretch pt-px">
      <div className="flex w-24 gap-px">
        <Btn label="No color" className="flex-1 bg-white">
          <svg viewBox="0 0 23 23" className="h-full w-full" aria-hidden="true"><path d="M2 2l19 19M21 2L2 21" stroke="#b01c28" strokeWidth="1.500" /></svg>
        </Btn>
        <Btn label="Black" className="flex-1 bg-black" />
        <Btn label="Gray" className="flex-1 bg-[#808080]" />
        <Btn label="White" className="flex-1 bg-white" />
      </div>
      <div className="grid min-w-0 flex-1 grid-cols-[repeat(29,31fr)_repeat(25,30fr)] gap-px pl-px">
        {[...SWATCHES_TOP, ...SWATCHES_BOTTOM].map((c, i) => (
          <button key={i} type="button" aria-label={`#${c}`} style={{ backgroundColor: `#${c}` }} />
        ))}
      </div>
      <div className="flex w-[47px] items-center justify-between pr-px pl-1">
        <Btn label="Scroll up"><Icon className="size-[9px]"><path d="M1 12l7-8 7 8" stroke="#777" strokeWidth="2" /></Icon></Btn>
        <Btn label="Scroll down"><Icon className="size-[9px]"><path d="M1 4l7 8 7-8" stroke={W} strokeWidth="2.400" /></Icon></Btn>
        <Btn label="Palette menu"><Icon className="size-[11px]"><path d="M0 4h16M0 9h16M0 14h16" stroke={W} strokeWidth="2" /></Icon></Btn>
      </div>
    </div>
  )
}

function StatusBar() {
  return (
    <footer className="flex h-[25px] shrink-0 items-center text-[#c8c8c8]">
      <dl className="grid w-[105px] grid-cols-[30px_1fr] gap-x-[23px] leading-[12px]">
        <dt className="text-right">Fill:</dt><dd>N/A</dd>
        <dt className="text-right">Stroke:</dt><dd>N/A</dd>
      </dl>
      <div className="flex items-center pl-2">
        <Spin id="opacity" label="O:" value="100" labelClass="w-[13px] text-[#c8c8c8]" boxClass="h-[23px] w-[50px]" muted />
      </div>
      <div className="ml-[9px] h-3 w-[2px] bg-[#d02f5a]" />
      <span className="ml-1 w-8">btz3</span>
      <Btn label="Hide layer" className="w-3">
        <Icon className="size-3"><path d="M1 9q7-9 14 0-7 7-14 0z" stroke={W} strokeWidth="1.800" /><circle cx="8" cy="9" r="2.500" fill={W} /><path d="M8 1v3M3 2l1.500 3M13 2l-1.500 3" stroke={W} strokeWidth="1.600" /></Icon>
      </Btn>
      <Btn label="Lock layer" className="ml-[15px] w-3"><LockIcon open className="size-[10px]" /></Btn>
      <p className="ml-[11px] flex-1 whitespace-nowrap">
        <b className="font-semibold text-[#e4e4e4]">Hold ALT</b> while hovering over item to highlight, <b className="font-semibold text-[#e4e4e4]">hold SHIFT</b> and click to hide/lock all.
      </p>
      <Btn label="Previous page" className="w-6"><Triangle dir="left" color="#888888" /></Btn>
      <Btn label="Pages" className="h-[23px] w-6 rounded border border-[#262626]"><Triangle color="#888888" /></Btn>
      <Btn label="Next page" className="w-6"><Triangle dir="right" color="#888888" /></Btn>
      <dl className="ml-[6px] grid grid-cols-[17px_34px] leading-[11px]">
        <dt>X:</dt><dd>281.74</dd>
        <dt>Y:</dt><dd>229.09</dd>
      </dl>
      <div className="flex items-center gap-1 pl-1 pr-[7px]">
        <Spin id="zoom" label="Z:" value="70%" labelClass="w-3" boxClass="h-[23px] w-[63px]" inputClass="pl-2" />
        <Spin id="rotate" label="R:" value="0.00°" labelClass="w-[13px]" boxClass="h-[23px] w-[69px]" inputClass="pl-[10px]" />
      </div>
    </footer>
  )
}

const APPS = [
  ['Files', 'bg-[#e8b765]', <path d="M0 3h6l2 2h8v9H0z" fill="#f4cf86" />],
  ['Terminal', 'bg-[#2f2f2f]', <path d="M2 4l3 2-3 2M7 8h4" stroke="#ddd" strokeWidth="1.300" />],
  ['Brave', 'bg-[#f58a3c]', <path d="M4 3h8l2 3-2 6-4 3-4-3-2-6zM5 7l2 1M11 7L9 8" fill="#fff" stroke="#f0762c" />],
  ['Discord', 'bg-[#6674dc]', <path d="M4 4q4-1.500 8 0 2.500 4 2 7.500l-3 1-1-1H6l-1 1-3-1Q1.500 8 4 4zM6 7.500v2M10 7.500v2" fill="#fff" stroke="#6674dc" />],
  ['Layers', 'bg-[#f0f0f0]', <>
    <path d="M2 11l6 3 6-3-6-3z" fill="#3aa0dc" /><path d="M2 8l6 3 6-3-6-3z" fill="#6cc04a" /><path d="M2 5l6 3 6-3-6-3z" fill="#f08a4a" />
  </>],
  ['Spotify', 'bg-[#2bbf5c]', <path d="M3 5.500q6-2 10 .8M3.500 8.500q5-1.500 8.500.7M4 11q4-1 7 .6" stroke="#0e2415" strokeWidth="1.600" />],
  ['Keys', 'bg-[#3a9a34]', <><circle cx="10.500" cy="5.500" r="2.800" fill="#fff" /><path d="M9 7l-6 6M5 11l1.500 1.500" stroke="#fff" strokeWidth="1.800" /></>],
  ['Screenshot', 'rounded-full bg-[#2a8fe0]', <><rect x="4" y="3.500" width="7" height="9" stroke="#0d2c4c" strokeWidth="1.400" /><circle cx="8" cy="7" r="1.500" stroke="#0d2c4c" /><path d="M12 9v4M10 11l2 2 2-2" stroke="#0d2c4c" /></>],
]

function Taskbar() {
  return (
    <footer className="flex h-5 shrink-0 items-center bg-[#1a1a1a] text-[10px] font-semibold text-[#e2e2e2]">
      <Btn label="Menu" className="ml-1 w-5">
        <Icon className="size-[19px]"><circle cx="8" cy="8" r="7" stroke={W} strokeWidth="1.200" /><path d="M4.500 4.500v5a2 2 0 0 0 2 2h3a2 2 0 0 0 2-2V7a1.200 1.200 0 0 0-2.400 0v2.500M9.100 7a1.200 1.200 0 0 0-2.400 0v2.500" stroke={W} strokeWidth="1.200" /></Icon>
      </Btn>
      <div className="ml-[10px] h-5 w-px bg-[#2c2c2c]" />
      <div className="ml-[6px] flex h-full items-center gap-1">
        {APPS.map(([label, tone, icon], i) => (
          <div key={label} className={clsx('flex h-full w-[21px] items-center justify-center border-b', i === 0 ? 'border-[#2a9bdc]' : 'border-transparent')}>
            <Btn label={label} className={clsx('size-[15px] rounded-[3px]', tone)}><Icon className="size-[13px]">{icon}</Icon></Btn>
          </div>
        ))}
        <div className="flex h-full w-[22px] items-center justify-center border-b border-[#2a9bdc] bg-[#585858]">
          <Btn label="Settings" className="size-[13px] bg-white">
            <Icon className="size-[11px]"><circle cx="8" cy="8" r="4" stroke="#33415c" strokeWidth="2.500" /><path d="M8 1v3M8 12v3M1 8h3M12 8h3M3 3l2 2M11 11l2 2M13 3l-2 2M5 11l-2 2" stroke="#33415c" strokeWidth="2" /></Icon>
          </Btn>
        </div>
      </div>
      <div className="ml-auto flex items-center gap-[6px]">
        <Icon><path d="M2 3h12v12H2z" stroke={W} strokeWidth="2" /><path d="M5 1h6v3H5zM6 6h4M8 6v6" stroke={W} strokeWidth="1.600" /></Icon>
        <Icon><path d="M8 1l6 2c0 6-2 10-6 12C4 13 2 9 2 3z" stroke="#ccc" strokeWidth="1.400" /><path d="M8 4l3 1c0 4-1 5-3 7-2-2-3-3-3-7z" fill={W} /></Icon>
        <Icon><path d="M0 8q5-6 9-4v8Q4 12 0 8z" stroke="#aaa" strokeWidth="1.600" /><rect x="8" y="3" width="8" height="10" fill="#aaa" /><circle cx="7" cy="8" r="2" fill="#ddd" /></Icon>
      </div>
      <svg viewBox="0 0 19 12" className="ml-[9px] h-3 w-[19px]" aria-label="English (US)">
        <rect width="19" height="12" fill="#f2dede" />
        <path d="M0 .5h19M0 3h19M0 5.500h19M0 8h19M0 10.500h19" stroke="#d4424c" strokeWidth="1.200" />
        <rect width="9" height="7" fill="#3c4f8f" />
      </svg>
      <div className="ml-2 flex items-center gap-[7px]">
        <Icon><path d="M0 6q8-7 16 0l-8 9z" fill="#666" /><path d="M1 6.500q7-6 14 0M4 9.500q4-3.500 8 0" stroke={W} strokeWidth="1.800" /><circle cx="8" cy="12.500" r="1.800" fill={W} /></Icon>
        <Icon><path d="M0 6h3l5-4v12l-5-4H0z" fill={W} /><path d="M10 6l5 5M15 6l-5 5" stroke={W} strokeWidth="1.500" /></Icon>
        <Icon><path d="M3 3h10v12H3z" stroke={W} strokeWidth="1.800" /><path d="M6 1h4" stroke={W} strokeWidth="2" /><rect x="5.500" y="5.500" width="5" height="7.500" fill={W} /></Icon>
      </div>
      <span className="ml-1">91% (1:08)</span>
      <time className="ml-[6px] mr-1">22 Jul 2025 23:41</time>
      <div className="h-full w-[7px] bg-[#2b2b2b]" />
    </footer>
  )
}

export default function App() {
  return (
    <div className="flex h-screen w-full flex-col overflow-hidden bg-[#333333] font-['Noto_Sans',sans-serif] text-[9px] leading-3">
      <TitleBar />
      <MenuBar />
      <Toolbar />
      <div className="flex min-h-0 flex-1">
        <Toolbox />
        <Canvas />
        <div className="flex w-[10px] shrink-0 items-center justify-center">
          <Icon className="h-3 w-1"><path d="M8-10v6M8 5v6M8 20v6" stroke="#ddd" strokeWidth="6" /></Icon>
        </div>
        <ObjectsPanel />
        <CommandBar />
      </div>
      <Palette />
      <StatusBar />
      <Taskbar />
    </div>
  )
}
